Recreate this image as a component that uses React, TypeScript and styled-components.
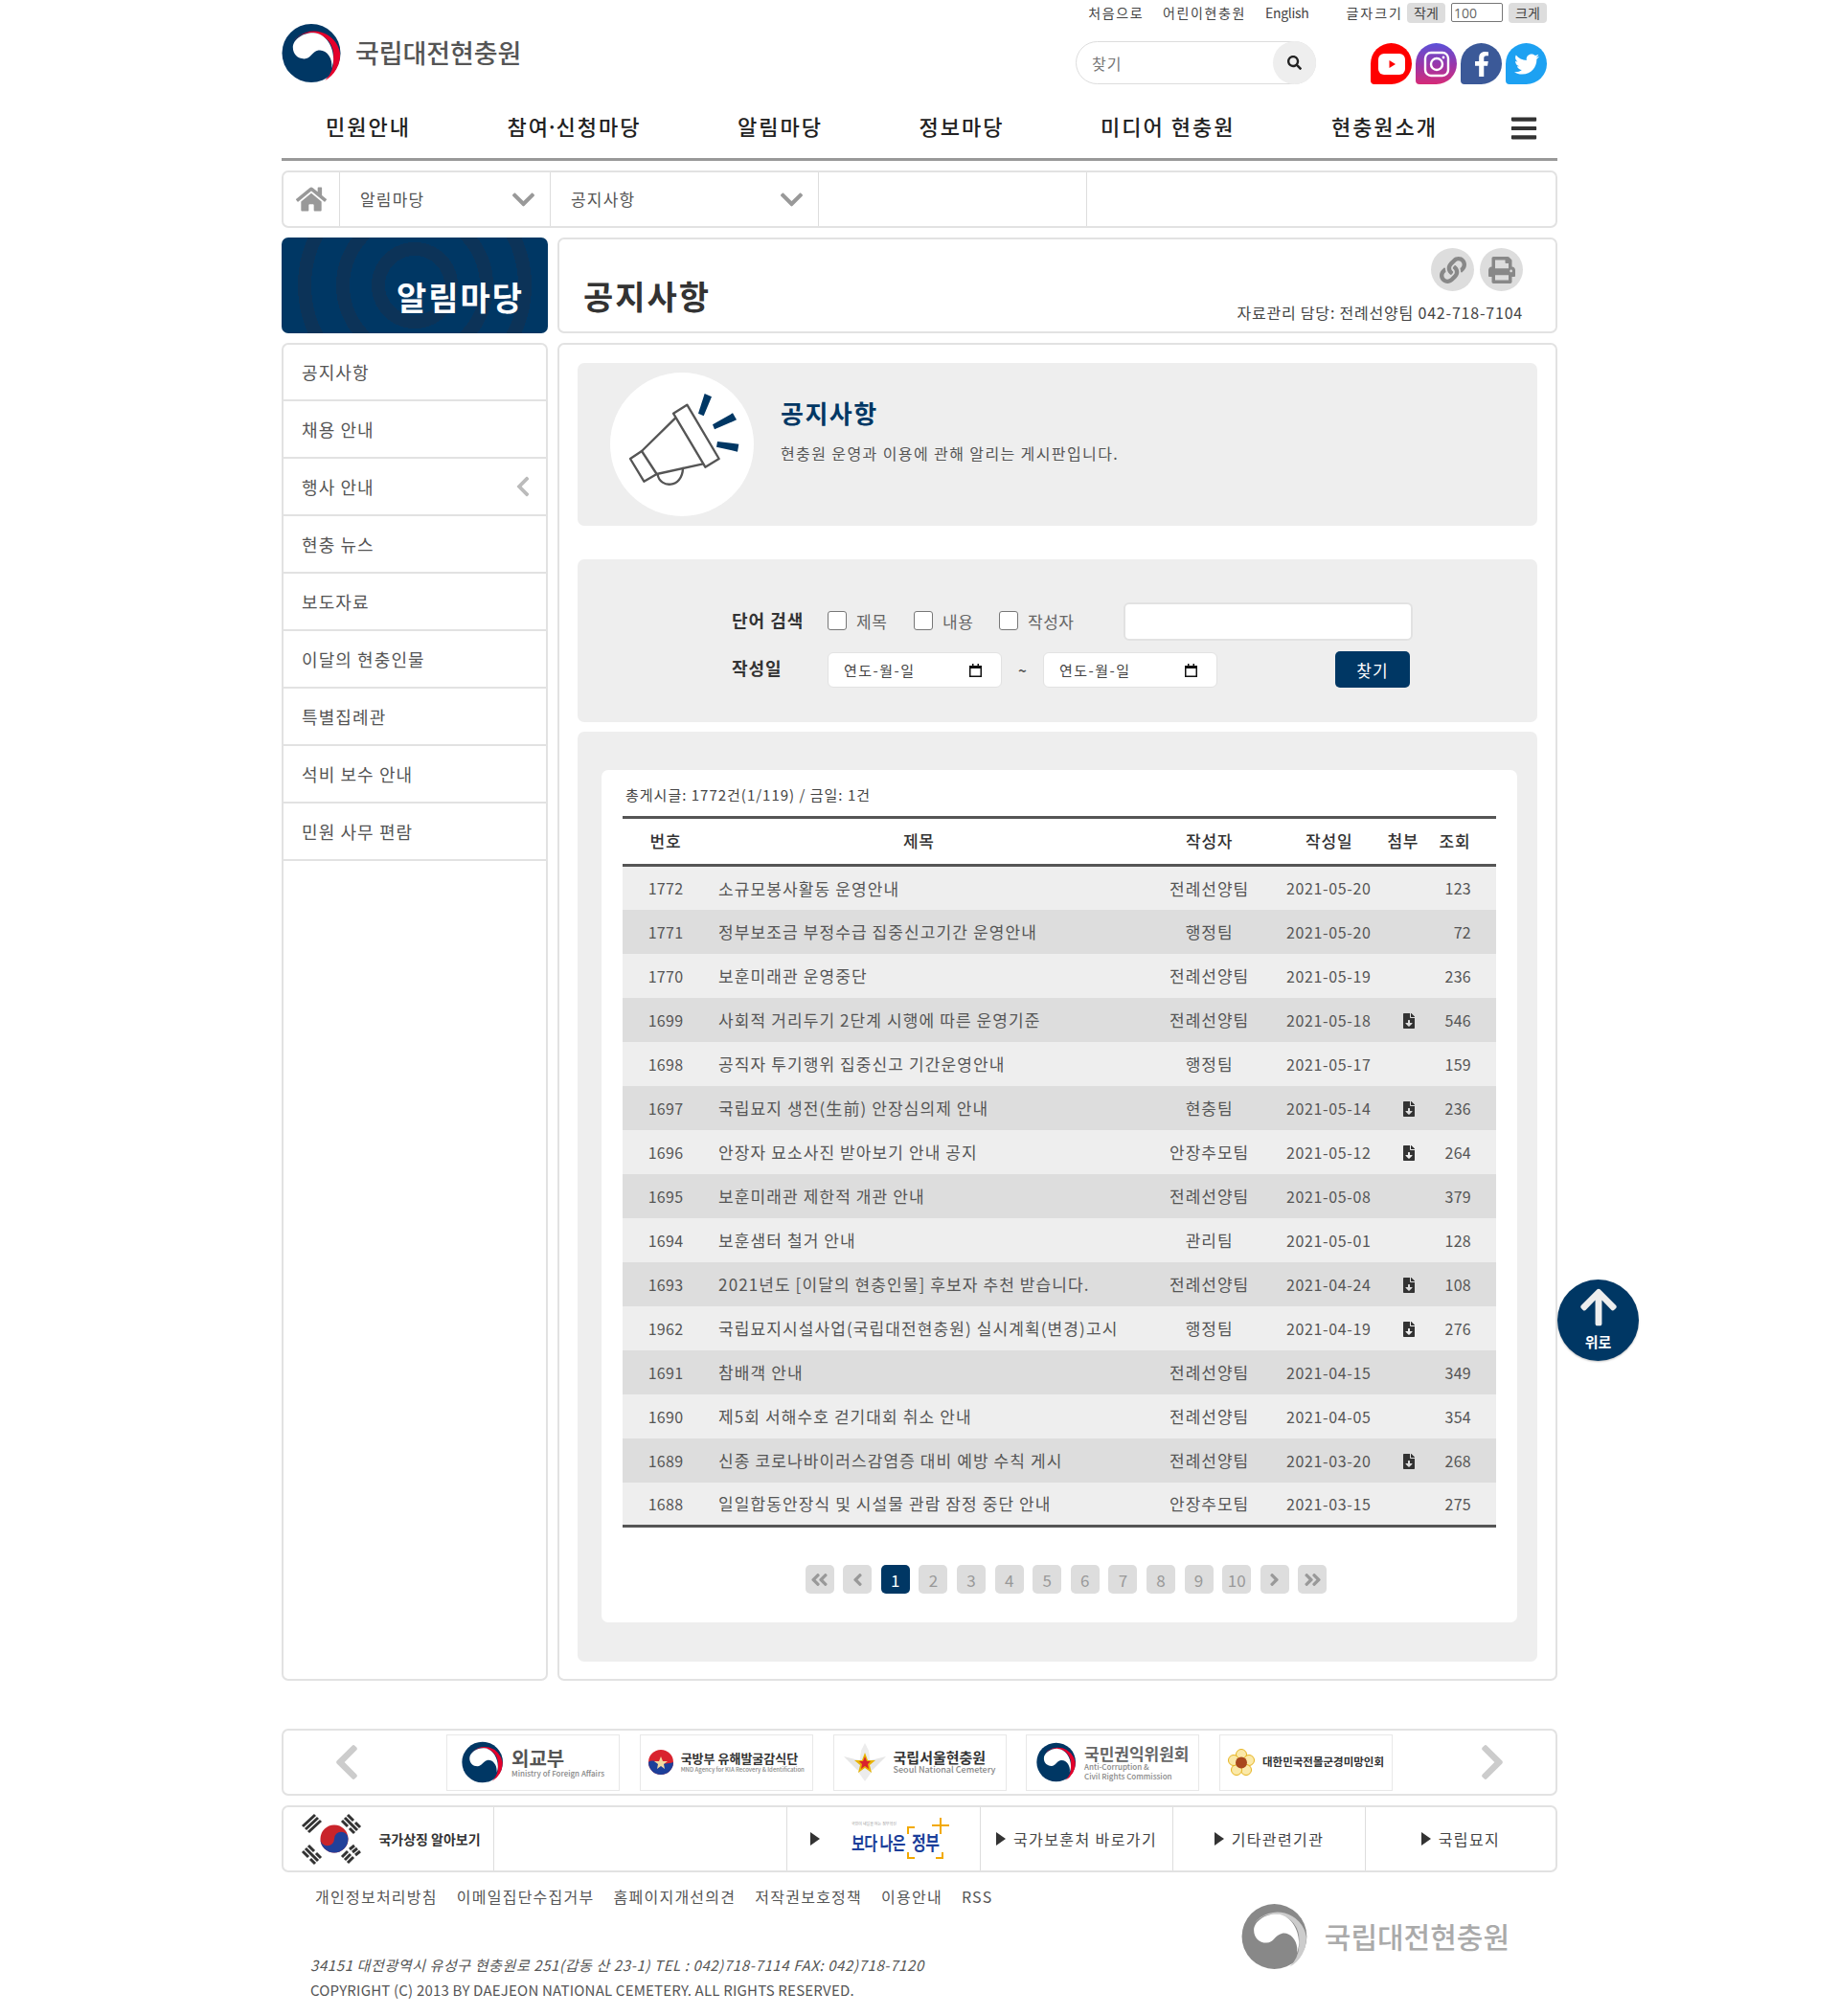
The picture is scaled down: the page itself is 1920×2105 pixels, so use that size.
import React from 'react';
import styled, { createGlobalStyle } from 'styled-components';
import {
  FaAngleDoubleLeft,
  FaAngleDoubleRight,
  FaAngleLeft,
  FaAngleRight,
  FaArrowUp,
  FaBars,
  FaChevronDown,
  FaChevronLeft,
  FaChevronRight,
  FaFacebookF,
  FaFileDownload,
  FaHome,
  FaLink,
  FaPrint,
  FaSearch,
  FaTwitter,
} from 'react-icons/fa';

const NAVY = '#003764';
const FONT = '"Noto Sans CJK KR", "Noto Sans", sans-serif';

const GlobalStyle = createGlobalStyle`
  * { box-sizing: border-box; }
  html, body { margin: 0; padding: 0; background: #fff; }
  body { font-family: ${FONT}; color: #444; }
  a { color: inherit; text-decoration: none; }
  ul { list-style: none; margin: 0; padding: 0; }
`;

const Page = styled.div`
  position: relative;
  width: 1332px;
  height: 2105px;
  margin: 0 auto;
`;

/* header */
const Header = styled.header`
  height: 168px;
  border-bottom: 3px solid #999;
`;

const HeaderTop = styled.div`
  display: flex;
  justify-content: space-between;
  height: 105px;
`;

const Brand = styled.a`
  display: flex;
  align-items: center;
  gap: 14px;
  height: 59px;
  margin-top: 26px;
`;

const BrandName = styled.span<{ $muted?: boolean }>`
  padding-bottom: 2px;
  font-size: ${(p) => (p.$muted ? 30 : 27)}px;
  font-weight: 500;
  letter-spacing: ${(p) => (p.$muted ? 0 : -0.1)}px;
  color: ${(p) => (p.$muted ? '#aaa' : '#555')};
`;

const HeaderRight = styled.div`
  display: flex;
  flex-direction: column;
  align-items: flex-end;
  padding-right: 11px;
`;

const UtilBar = styled.div`
  display: flex;
  align-items: center;
  height: 32px;
  padding-bottom: 6px;
  font-size: 14px;
  letter-spacing: 1.6px;
  color: #444;
`;

const UtilLink = styled.a`
  margin-right: 20px;
  &:nth-child(3) {
    margin-right: 39px;
    letter-spacing: -0.3px;
  }
`;

const UtilLabel = styled.span`
  margin-right: 4px;
  letter-spacing: 2px;
`;

const SizeButton = styled.button`
  width: 40px;
  height: 21px;
  padding: 0;
  border: 0;
  border-radius: 4px;
  background: #ddd;
  color: #444;
  font: 14px ${FONT};
`;

const SizeInput = styled.input`
  width: 54px;
  height: 20px;
  margin: 0 6px;
  padding: 0 2px;
  border: 1px solid #777;
  border-radius: 2px;
  color: #666;
  font: 14px "Open Sans", ${FONT};
`;

const SearchRow = styled.div`
  display: flex;
  align-items: center;
  margin-top: 13px;
`;

const SearchBox = styled.div`
  display: flex;
  align-items: center;
  justify-content: space-between;
  width: 251px;
  height: 45px;
  margin: -2px 57px 0 0;
  padding-left: 16px;
  border: 1px solid #ddd;
  border-radius: 23px;
  color: #777;
  font-size: 16px;
  letter-spacing: 1px;
`;

const SearchButton = styled.span`
  display: flex;
  align-items: center;
  justify-content: center;
  width: 45px;
  height: 45px;
  margin: -1px;
  border-radius: 50%;
  background: #eee;
  color: #222;
  font-size: 15px;
`;

const SocialList = styled.div`
  display: flex;
  gap: 4px;
`;

const Social = styled.a<{ $bg: string }>`
  display: flex;
  align-items: center;
  justify-content: center;
  width: 43px;
  height: 43px;
  border-radius: 50% 50% 50% 4px;
  background: ${(p) => p.$bg};
  color: #fff;
  font-size: 26px;
`;

const Nav = styled.nav`
  display: flex;
  align-items: center;
  justify-content: space-between;
  height: 57px;
  padding: 0 20px 0 46px;
`;

const NavList = styled.div`
  display: flex;
  gap: 100.5px;
  padding-bottom: 5px;
  font-size: 22px;
  font-weight: 500;
  letter-spacing: 2px;
  white-space: nowrap;
  color: #222;
`;

const NavDot = styled.span`
  margin: 0 -4px;
`;

const NavMenu = styled.a`
  display: flex;
  font-size: 30px;
  color: #333;
`;

/* boxed rows */
const Boxed = styled.div`
  border: 2px solid #e2e2e2;
  border-radius: 7px;
  background: #fff;
`;

const Breadcrumb = styled(Boxed)`
  display: grid;
  grid-template-columns: 59px 220px 280px 280px 1fr;
  height: 60px;
  margin-top: 10px;
`;

const CrumbHome = styled.a`
  display: flex;
  align-items: center;
  justify-content: center;
  border-right: 1px solid #ddd;
  color: #999;
  font-size: 32px;
`;

const Crumb = styled.div`
  display: flex;
  align-items: center;
  justify-content: space-between;
  padding: 0 14px 2px 21px;
  border-right: 1px solid #ddd;
  font-size: 17px;
  letter-spacing: 1.2px;
  color: #555;
  svg {
    margin-top: 2px;
    color: #999;
    font-size: 27px;
  }
  &:last-child {
    border-right: 0;
  }
`;

const TitleRow = styled.div`
  display: grid;
  grid-template-columns: 278px minmax(0, 1fr);
  gap: 10px;
  height: 100px;
  margin-top: 10px;
`;

const SectionBanner = styled.div`
  display: flex;
  align-items: center;
  justify-content: flex-end;
  padding: 23px 25px 0 0;
  border-radius: 7px;
  background: radial-gradient(
    circle at 50% 50%,
    ${NAVY} 0 31px,
    #0c3358 31px 45px,
    ${NAVY} 45px 68px,
    #0c3358 68px 82px,
    ${NAVY} 82px 108px,
    #0c3358 108px 122px,
    ${NAVY} 122px
  );
  color: #fff;
  font-size: 34px;
  font-weight: 700;
  letter-spacing: 2px;
`;

const TitlePanel = styled(Boxed)`
  display: flex;
  justify-content: space-between;
  padding: 9px 34px 0 25px;
`;

const PageTitle = styled.h1`
  margin: 25px 0 0;
  font-size: 34px;
  font-weight: 700;
  letter-spacing: 2px;
  color: #333;
`;

const TitleTools = styled.div`
  display: flex;
  flex-direction: column;
  align-items: flex-end;
`;

const ToolButtons = styled.div`
  display: flex;
  gap: 6px;
`;

const ToolButton = styled.a`
  display: flex;
  align-items: center;
  justify-content: center;
  width: 45px;
  height: 45px;
  border-radius: 50%;
  background: #ddd;
  color: #888;
  font-size: 28px;
`;

const Manager = styled.p`
  margin: 10px 0 0;
  font-size: 16px;
  letter-spacing: 0.8px;
  color: #444;
`;

/* body */
const Content = styled.div`
  display: grid;
  grid-template-columns: 278px minmax(0, 1fr);
  gap: 10px;
  height: 1397px;
  margin-top: 10px;
`;

const SideList = styled.ul`
  margin-top: -1px;
`;

const SideItem = styled.li`
  display: flex;
  align-items: center;
  justify-content: space-between;
  height: 60px;
  padding: 0 12px 0 19px;
  border-bottom: 2px solid #e2e2e2;
  font-size: 18px;
  letter-spacing: 1.1px;
  color: #555;
  svg {
    color: #bbb;
    font-size: 24px;
  }
`;

const Main = styled(Boxed)`
  display: flex;
  flex-direction: column;
  padding: 19px 19px 18px;
`;

const Panel = styled.section`
  border-radius: 7px;
  background: #eee;
`;

const Intro = styled(Panel)`
  display: flex;
  gap: 28px;
  height: 170px;
  padding: 10px 0 0 34px;
`;

const IntroCircle = styled.div`
  width: 150px;
  height: 150px;
  border-radius: 50%;
  background: #fff;
  svg {
    display: block;
  }
`;

const IntroTitle = styled.h2`
  margin: 24px 0 0;
  font-size: 26px;
  font-weight: 700;
  line-height: 36px;
  letter-spacing: 1.5px;
  color: ${NAVY};
`;

const IntroText = styled.p`
  margin: 12px 0 0;
  font-size: 16px;
  line-height: 24px;
  letter-spacing: 1.4px;
  color: #555;
`;

const SearchPanel = styled(Panel)`
  height: 170px;
  margin-top: 35px;
  padding: 45px 130px 0 161px;
`;

const SearchLine = styled.div<{ $second?: boolean }>`
  display: flex;
  align-items: center;
  height: ${(p) => (p.$second ? 38 : 40)}px;
  margin-top: ${(p) => (p.$second ? 11 : 0)}px;
`;

const FieldLabel = styled.span`
  width: 100px;
  margin-bottom: 4px;
  font-size: 18px;
  font-weight: 700;
  letter-spacing: 1px;
  color: #333;
`;

const CheckLabel = styled.label<{ $width: number }>`
  display: flex;
  align-items: center;
  gap: 10px;
  width: ${(p) => p.$width}px;
  margin-bottom: 2px;
  font-size: 17px;
  letter-spacing: 0.5px;
  color: #666;
`;

const CheckBox = styled.input`
  appearance: none;
  width: 20px;
  height: 20px;
  margin: 0;
  border: 1px solid #777;
  border-radius: 3px;
  background: #fff;
`;

const TextField = styled.input`
  width: 302px;
  height: 40px;
  border: 2px solid #e2e2e2;
  border-radius: 6px;
  background: #fff;
`;

const DateField = styled.div`
  display: flex;
  align-items: center;
  justify-content: space-between;
  width: 182px;
  height: 37px;
  margin-top: 1px;
  padding: 0 20px 0 16px;
  border: 1px solid #e2e2e2;
  border-radius: 6px;
  background: #fff;
  font-size: 15px;
  letter-spacing: 1.5px;
  color: #444;
`;

const DateDash = styled.span`
  width: 43px;
  text-align: center;
  font-size: 15px;
  font-weight: 700;
  color: #555;
`;

const FindButton = styled.button`
  width: 78px;
  height: 38px;
  margin: 0 3px 0 auto;
  padding: 0;
  border: 0;
  border-radius: 5px;
  background: ${NAVY};
  color: #fff;
  font: 17px ${FONT};
  letter-spacing: 1px;
`;

const ListPanel = styled(Panel)`
  flex: 1;
  margin-top: 10px;
  padding: 40px 21px 41px 25px;
`;

const ListCard = styled.div`
  height: 100%;
  padding: 0 22px;
  border-radius: 7px;
  background: #fff;
`;

const ListCount = styled.p`
  height: 48px;
  margin: 0;
  padding-left: 3px;
  font-size: 15px;
  line-height: 52px;
  letter-spacing: 1px;
  color: #444;
`;

const Table = styled.table`
  width: 100%;
  border-collapse: collapse;
  table-layout: fixed;
  border-top: 3px solid #555;
  border-bottom: 3px solid #555;
  font-size: 16px;
  color: #555;
`;

const Col = styled.col<{ $width: number }>`
  width: ${(p) => p.$width}px;
`;

const HeadRow = styled.tr`
  height: 50px;
  border-bottom: 3px solid #555;
`;

const HeadCell = styled.th<{ $right?: number; $left?: number }>`
  padding: 0 ${(p) => p.$right || 0}px 2px ${(p) => p.$left || 0}px;
  font-size: 17px;
  font-weight: 500;
  letter-spacing: 0.8px;
  white-space: nowrap;
  color: #333;
`;

const Row = styled.tr`
  height: 46px;
  background: #eee;
  &:nth-child(even) {
    background: #ddd;
  }
`;

const NumberCell = styled.td`
  text-align: center;
  letter-spacing: 0.3px;
`;

const TitleCell = styled.td`
  padding-left: 10px;
  font-size: 17px;
  letter-spacing: 1.1px;
  white-space: nowrap;
`;

const TeamCell = styled.td`
  text-align: center;
  font-size: 17px;
  letter-spacing: 1px;
  white-space: nowrap;
`;

const DateCell = styled.td`
  padding-left: 6px;
  text-align: center;
  letter-spacing: 0.65px;
`;

const FileCell = styled.td`
  text-align: center;
  svg {
    display: inline-block;
    vertical-align: -2px;
    color: #333;
    font-size: 16px;
  }
`;

const ViewsCell = styled.td`
  padding-right: 26px;
  text-align: right;
  letter-spacing: 0.3px;
`;

const Pager = styled.div`
  display: flex;
  justify-content: center;
  gap: 9.6px;
  margin-top: 39px;
  padding-left: 14px;
`;

const PageButton = styled.a<{ $active?: boolean }>`
  display: flex;
  align-items: center;
  justify-content: center;
  width: 30px;
  height: 30px;
  border-radius: 5px;
  background: ${(p) => (p.$active ? NAVY : '#ddd')};
  color: ${(p) => (p.$active ? '#fff' : '#999')};
  font-size: 17px;
  svg {
    font-size: 21px;
  }
`;

/* footer */
const Carousel = styled(Boxed)`
  display: grid;
  grid-template-columns: 170px minmax(0, 1fr) 170px;
  align-items: center;
  height: 70px;
  margin-top: 50px;
`;

const CarouselArrow = styled.a<{ $right?: boolean }>`
  display: flex;
  justify-content: ${(p) => (p.$right ? 'flex-end' : 'flex-start')};
  padding: 0 45px;
  color: #ccc;
  font-size: 42px;
`;

const LogoTrack = styled.div`
  display: flex;
  justify-content: space-between;
`;

const LogoBox = styled.a`
  display: flex;
  align-items: center;
  justify-content: center;
  gap: 8px;
  width: 181px;
  height: 59px;
  border: 1px solid #e8e8e8;
`;

const LogoText = styled.div`
  display: flex;
  flex-direction: column;
  white-space: nowrap;
`;

const LogoMain = styled.span<{ $size: number; $color?: string }>`
  font-size: ${(p) => p.$size}px;
  font-weight: 700;
  line-height: 1.15;
  color: ${(p) => p.$color || '#333'};
`;

const LogoSub = styled.span<{ $size: number }>`
  font-size: ${(p) => p.$size}px;
  font-weight: 500;
  line-height: 1.2;
  color: #888;
`;

const RelatedBar = styled(Boxed)`
  display: grid;
  grid-template-columns: 220px 306px 202px 201px 201px minmax(0, 1fr);
  height: 70px;
  margin-top: 10px;
`;

const RelatedCell = styled.a`
  display: flex;
  align-items: center;
  justify-content: center;
  gap: 8px;
  border-right: 1px solid #ddd;
  font-size: 16px;
  letter-spacing: 1.4px;
  color: #444;
  &:last-child {
    border-right: 0;
  }
`;

const SymbolCell = styled(RelatedCell)`
  gap: 6px;
`;

const BetterGovCell = styled(RelatedCell)`
  justify-content: flex-start;
  gap: 33px;
  padding-left: 24px;
`;

const Triangle = styled.i`
  width: 0;
  height: 0;
  border-top: 7px solid transparent;
  border-bottom: 7px solid transparent;
  border-left: 10px solid #333;
`;

const SymbolName = styled.span`
  font-size: 14px;
  font-weight: 700;
  letter-spacing: 0;
  color: #333;
`;

const BetterGov = styled.span`
  position: relative;
  display: flex;
  align-items: center;
  width: 102px;
  height: 44px;
`;

const BetterGovWord = styled.span<{ $offset: number; $size: number }>`
  margin: 6px 0 0 ${(p) => p.$offset}px;
  transform: scaleY(1.3);
  font-size: ${(p) => p.$size}px;
  font-weight: 700;
  line-height: 1;
  letter-spacing: -0.5px;
  white-space: nowrap;
  color: #1c3f9a;
`;

const BetterGovMotto = styled.span`
  position: absolute;
  top: 3px;
  left: 0;
  font-size: 4px;
  line-height: 6px;
  letter-spacing: 0;
  white-space: nowrap;
  color: #999;
`;

const BetterGovFrame = styled.svg`
  position: absolute;
  top: 0;
  left: 56px;
`;

const Footer = styled.footer`
  display: flex;
  justify-content: space-between;
`;

const FooterLeft = styled.div`
  padding-top: 15px;
`;

const FooterLinks = styled.ul`
  display: flex;
  gap: 20px;
  padding-left: 35px;
  font-size: 16px;
  line-height: 20px;
  letter-spacing: 1.25px;
  color: #555;
`;

const Address = styled.address`
  margin: 50px 0 0 30px;
  font-size: 15px;
  line-height: 24px;
  letter-spacing: 0.6px;
  color: #555;
`;

const Copyright = styled.p`
  margin: 1px 0 0 30px;
  font-size: 15px;
  line-height: 26px;
  letter-spacing: 0.2px;
  color: #555;
`;

const FooterBrand = styled.div`
  display: flex;
  align-items: center;
  gap: 17px;
  height: 68px;
  margin: 33px 50px 0 0;
`;

const TopButton = styled.a`
  position: absolute;
  top: 1336px;
  left: 1332px;
  display: flex;
  flex-direction: column;
  align-items: center;
  width: 85px;
  height: 85px;
  padding-top: 7px;
  border-radius: 50%;
  background: ${NAVY};
  box-shadow: 0 1px 2px rgba(0, 0, 0, 0.25);
  color: #fff;
  font-size: 15px;
  font-weight: 700;
  line-height: 20px;
  svg {
    margin-bottom: 4px;
    color: #eee;
    font-size: 44px;
  }
`;

const Taegeuk: React.FC<{ size: number; dark?: string; accent?: string }> = ({
  size,
  dark = NAVY,
  accent = '#e4002b',
}) => (
  <svg width={size} height={size} viewBox="0 0 64 64">
    <circle cx="31.5" cy="32" r="31" fill={dark} />
    <path
      d="M12.7 19 A28 28 0 0 1 62 32 A31 31 0 0 1 46 61 A30 30 0 0 0 55 37 A24 24 0 0 0 34 10.5 A26 26 0 0 0 12.7 19Z"
      fill={accent}
    />
    <path
      d="M12 26 C12 17 24 10 34 10.5 C46 11 55 24 55 38 C55 42 54 45 53 48 C55 37 47 27.5 39 29 C32 30.5 31 38 24 38 C17 38 12 33 12 26Z"
      fill="#fff"
    />
  </svg>
);

const Megaphone = () => (
  <svg width="150" height="150" viewBox="9 12 450 450" fill="none">
    <g stroke="#555" strokeWidth="7" strokeLinejoin="round" strokeLinecap="round">
      <path d="M207 140 L250 113 L350 282 L307 308Z" />
      <path d="M72 282 L108 258 L155 330 L115 353Z" />
      <path d="M213 155 L108 258" />
      <path d="M300 298 L155 330" />
      <path d="M158 332 C165 375 235 375 237 312" />
    </g>
    <g fill={NAVY}>
      <path d="M305 78 L327 88 L302 148 L285 140Z" />
      <path d="M330 175 L393 139 L405 160 L336 190Z" />
      <path d="M345 228 L412 236 L408 260 L342 245Z" />
    </g>
  </svg>
);

const CalendarIcon = () => (
  <svg width="13" height="14" viewBox="0 0 13 14">
    <path d="M3 0h1.5v2h4V0H10v2h3v12H0V2h3z" fill="#111" />
    <rect x="1.5" y="5" width="10" height="7.5" fill="#fff" />
  </svg>
);

const YoutubeIcon = () => (
  <svg width="28" height="22" viewBox="0 0 28 22">
    <rect width="28" height="22" rx="6" fill="#fff" />
    <path d="M11.5 7 L18 11 L11.5 15Z" fill="#f00" />
  </svg>
);

const InstagramIcon = () => (
  <svg width="28" height="28" viewBox="0 0 28 28" fill="none" stroke="#fff">
    <rect x="2" y="2" width="24" height="24" rx="6" strokeWidth="2.4" />
    <circle cx="14" cy="14" r="6" strokeWidth="2.4" />
    <circle cx="21" cy="7" r="1.4" fill="#fff" stroke="none" />
  </svg>
);

const FlagIcon = () => (
  <svg width="80" height="56" viewBox="0 0 76 56">
    <circle cx="38" cy="28" r="14.5" fill="#c9242b" />
    <path
      d="M23.5 28 A14.5 14.5 0 0 0 52.5 28 A7.25 7.25 0 0 0 38 28 A7.25 7.25 0 0 1 23.5 28Z"
      fill="#21409a"
    />
    <g stroke="#333" strokeWidth="3">
      <path d="M5 15 L18 3 M8 18 L21 6 M11 21 L24 9" />
      <path d="M52 3 L58 9 M60 11 L65 16 M49 6 L62 19 M46 9 L52 15 M54 17 L59 22" />
      <path d="M5 41 L11 47 M13 49 L18 54 M8 38 L21 51 M11 35 L17 41 M19 43 L24 48" />
      <path d="M46 47 L52 41 M54 39 L59 35 M49 50 L55 44 M57 42 L62 38 M52 53 L58 47 M60 45 L65 41" />
    </g>
  </svg>
);

const ForcesEmblem = () => (
  <svg width="44" height="44" viewBox="0 0 44 44">
    <path d="M0 16 L16 20 L28 20 L44 16 L30 30 L14 30Z" fill="#e6e6e6" />
    <path d="M22 2 L26 10 L29 32 L22 42 L15 32 L18 10Z" fill="#ececec" />
    <path d="M22 12 L25 20 L33 20 L27 25 L29 33 L22 28 L15 33 L17 25 L11 20 L19 20Z" fill="#e8b400" />
    <path d="M22 16 L24 21 L28 21 L25 24 L26 29 L22 26 L18 29 L19 24 L16 21 L20 21Z" fill="#d9232e" />
  </svg>
);

const MoundEmblem = () => (
  <svg width="28" height="28" viewBox="0 0 28 28">
    <g fill="#fbe9a8" stroke="#e6b422">
      <circle cx="14" cy="6" r="5.5" />
      <circle cx="22" cy="12" r="5.5" />
      <circle cx="19" cy="22" r="5.5" />
      <circle cx="9" cy="22" r="5.5" />
      <circle cx="6" cy="12" r="5.5" />
    </g>
    <circle cx="14" cy="14.5" r="6" fill="#a8471c" />
  </svg>
);

const MissingSoldierEmblem = () => (
  <svg width="26" height="26" viewBox="0 0 26 26">
    <circle cx="13" cy="13" r="13" fill="#d9232e" />
    <path d="M0 13 C6 8 12 18 26 13 A13 13 0 0 1 0 13Z" fill="#1c3f9a" />
    <path d="M13 7 L15 12 L20 12 L16 15 L17 20 L13 17 L9 20 L10 15 L6 12 L11 12Z" fill="#f4d9a0" />
  </svg>
);

const sideItems = [
  '공지사항',
  '채용 안내',
  '행사 안내',
  '현충 뉴스',
  '보도자료',
  '이달의 현충인물',
  '특별집례관',
  '석비 보수 안내',
  '민원 사무 편람',
];

const notices: [string, string, string, string, boolean, string][] = [
  ['1772', '소규모봉사활동 운영안내', '전례선양팀', '2021-05-20', false, '123'],
  ['1771', '정부보조금 부정수급 집중신고기간 운영안내', '행정팀', '2021-05-20', false, '72'],
  ['1770', '보훈미래관 운영중단', '전례선양팀', '2021-05-19', false, '236'],
  ['1699', '사회적 거리두기 2단계 시행에 따른 운영기준', '전례선양팀', '2021-05-18', true, '546'],
  ['1698', '공직자 투기행위 집중신고 기간운영안내', '행정팀', '2021-05-17', false, '159'],
  ['1697', '국립묘지 생전(生前) 안장심의제 안내', '현충팀', '2021-05-14', true, '236'],
  ['1696', '안장자 묘소사진 받아보기 안내 공지', '안장추모팀', '2021-05-12', true, '264'],
  ['1695', '보훈미래관 제한적 개관 안내', '전례선양팀', '2021-05-08', false, '379'],
  ['1694', '보훈샘터 철거 안내', '관리팀', '2021-05-01', false, '128'],
  ['1693', '2021년도 [이달의 현충인물] 후보자 추천 받습니다.', '전례선양팀', '2021-04-24', true, '108'],
  ['1962', '국립묘지시설사업(국립대전현충원) 실시계획(변경)고시', '행정팀', '2021-04-19', true, '276'],
  ['1691', '참배객 안내', '전례선양팀', '2021-04-15', false, '349'],
  ['1690', '제5회 서해수호 걷기대회 취소 안내', '전례선양팀', '2021-04-05', false, '354'],
  ['1689', '신종 코로나바이러스감염증 대비 예방 수칙 게시', '전례선양팀', '2021-03-20', true, '268'],
  ['1688', '일일합동안장식 및 시설물 관람 잠정 중단 안내', '안장추모팀', '2021-03-15', false, '275'],
];

const pages = ['1', '2', '3', '4', '5', '6', '7', '8', '9', '10'];

const footerLinks = ['개인정보처리방침', '이메일집단수집거부', '홈페이지개선의견', '저작권보호정책', '이용안내', 'RSS'];

export default function App() {
  return (
    <Page>
      <GlobalStyle />
      <Header>
        <HeaderTop>
          <Brand href="#">
            <Taegeuk size={63} />
            <BrandName>국립대전현충원</BrandName>
          </Brand>
          <HeaderRight>
            <UtilBar>
              <UtilLink href="#">처음으로</UtilLink>
              <UtilLink href="#">어린이현충원</UtilLink>
              <UtilLink href="#">English</UtilLink>
              <UtilLabel>글자크기</UtilLabel>
              <SizeButton>작게</SizeButton>
              <SizeInput defaultValue="100" />
              <SizeButton>크게</SizeButton>
            </UtilBar>
            <SearchRow>
              <SearchBox>
                찾기
                <SearchButton>
                  <FaSearch />
                </SearchButton>
              </SearchBox>
              <SocialList>
                <Social href="#" $bg="#f00">
                  <YoutubeIcon />
                </Social>
                <Social href="#" $bg="linear-gradient(#5b51d8, #9c36a8 55%, #d62b77)">
                  <InstagramIcon />
                </Social>
                <Social href="#" $bg="#3b5998">
                  <FaFacebookF />
                </Social>
                <Social href="#" $bg="#1da1f2">
                  <FaTwitter />
                </Social>
              </SocialList>
            </SearchRow>
          </HeaderRight>
        </HeaderTop>
        <Nav>
          <NavList>
            <a href="#">민원안내</a>
            <a href="#">
              참여<NavDot>·</NavDot>신청마당
            </a>
            <a href="#">알림마당</a>
            <a href="#">정보마당</a>
            <a href="#">미디어 현충원</a>
            <a href="#">현충원소개</a>
          </NavList>
          <NavMenu href="#">
            <FaBars />
          </NavMenu>
        </Nav>
      </Header>

      <Breadcrumb>
        <CrumbHome href="#">
          <FaHome />
        </CrumbHome>
        <Crumb>
          알림마당
          <FaChevronDown />
        </Crumb>
        <Crumb>
          공지사항
          <FaChevronDown />
        </Crumb>
        <Crumb />
        <Crumb />
      </Breadcrumb>

      <TitleRow>
        <SectionBanner>알림마당</SectionBanner>
        <TitlePanel>
          <PageTitle>공지사항</PageTitle>
          <TitleTools>
            <ToolButtons>
              <ToolButton href="#">
                <FaLink />
              </ToolButton>
              <ToolButton href="#">
                <FaPrint />
              </ToolButton>
            </ToolButtons>
            <Manager>자료관리 담당: 전례선양팀 042-718-7104</Manager>
          </TitleTools>
        </TitlePanel>
      </TitleRow>

      <Content>
        <Boxed>
          <SideList>
            {sideItems.map((item) => (
              <SideItem key={item}>
                {item}
                {item === '행사 안내' && <FaChevronLeft />}
              </SideItem>
            ))}
          </SideList>
        </Boxed>
        <Main>
          <Intro>
            <IntroCircle>
              <Megaphone />
            </IntroCircle>
            <div>
              <IntroTitle>공지사항</IntroTitle>
              <IntroText>현충원 운영과 이용에 관해 알리는 게시판입니다.</IntroText>
            </div>
          </Intro>

          <SearchPanel>
            <SearchLine>
              <FieldLabel>단어 검색</FieldLabel>
              <CheckLabel $width={90}>
                <CheckBox type="checkbox" />
                제목
              </CheckLabel>
              <CheckLabel $width={89}>
                <CheckBox type="checkbox" />
                내용
              </CheckLabel>
              <CheckLabel $width={130}>
                <CheckBox type="checkbox" />
                작성자
              </CheckLabel>
              <TextField />
            </SearchLine>
            <SearchLine $second>
              <FieldLabel>작성일</FieldLabel>
              <DateField>
                연도-월-일
                <CalendarIcon />
              </DateField>
              <DateDash>~</DateDash>
              <DateField>
                연도-월-일
                <CalendarIcon />
              </DateField>
              <FindButton>찾기</FindButton>
            </SearchLine>
          </SearchPanel>

          <ListPanel>
            <ListCard>
              <ListCount>총게시글: 1772건(1/119) / 금일: 1건</ListCount>
              <Table>
                <colgroup>
                  <Col $width={90} />
                  <Col $width={462} />
                  <Col $width={120} />
                  <Col $width={124} />
                  <Col $width={48} />
                  <Col $width={67} />
                </colgroup>
                <thead>
                  <HeadRow>
                    <HeadCell>번호</HeadCell>
                    <HeadCell $right={24}>제목</HeadCell>
                    <HeadCell>작성자</HeadCell>
                    <HeadCell $left={6}>작성일</HeadCell>
                    <HeadCell $right={12}>첨부</HeadCell>
                    <HeadCell $right={19}>조회</HeadCell>
                  </HeadRow>
                </thead>
                <tbody>
                  {notices.map(([no, title, team, date, file, views]) => (
                    <Row key={no}>
                      <NumberCell>{no}</NumberCell>
                      <TitleCell>{title}</TitleCell>
                      <TeamCell>{team}</TeamCell>
                      <DateCell>{date}</DateCell>
                      <FileCell>{file && <FaFileDownload />}</FileCell>
                      <ViewsCell>{views}</ViewsCell>
                    </Row>
                  ))}
                </tbody>
              </Table>
              <Pager>
                <PageButton href="#">
                  <FaAngleDoubleLeft />
                </PageButton>
                <PageButton href="#">
                  <FaAngleLeft />
                </PageButton>
                {pages.map((n) => (
                  <PageButton href="#" key={n} $active={n === '1'}>
                    {n}
                  </PageButton>
                ))}
                <PageButton href="#">
                  <FaAngleRight />
                </PageButton>
                <PageButton href="#">
                  <FaAngleDoubleRight />
                </PageButton>
              </Pager>
            </ListCard>
          </ListPanel>
        </Main>
      </Content>

      <Carousel>
        <CarouselArrow href="#">
          <FaChevronLeft />
        </CarouselArrow>
        <LogoTrack>
          <LogoBox href="#">
            <Taegeuk size={44} />
            <LogoText>
              <LogoMain $size={20} $color="#555">
                외교부
              </LogoMain>
              <LogoSub $size={8}>Ministry of Foreign Affairs</LogoSub>
            </LogoText>
          </LogoBox>
          <LogoBox href="#">
            <MissingSoldierEmblem />
            <LogoText>
              <LogoMain $size={13}>국방부 유해발굴감식단</LogoMain>
              <LogoSub $size={6}>MND Agency for KIA Recovery &amp; Identification</LogoSub>
            </LogoText>
          </LogoBox>
          <LogoBox href="#">
            <ForcesEmblem />
            <LogoText>
              <LogoMain $size={15}>국립서울현충원</LogoMain>
              <LogoSub $size={9}>Seoul National Cemetery</LogoSub>
            </LogoText>
          </LogoBox>
          <LogoBox href="#">
            <Taegeuk size={42} />
            <LogoText>
              <LogoMain $size={17} $color="#666">
                국민권익위원회
              </LogoMain>
              <LogoSub $size={8}>Anti-Corruption &amp;</LogoSub>
              <LogoSub $size={8}>Civil Rights Commission</LogoSub>
            </LogoText>
          </LogoBox>
          <LogoBox href="#">
            <MoundEmblem />
            <LogoText>
              <LogoMain $size={11.5}>대한민국전몰군경미망인회</LogoMain>
            </LogoText>
          </LogoBox>
        </LogoTrack>
        <CarouselArrow href="#" $right>
          <FaChevronRight />
        </CarouselArrow>
      </Carousel>

      <RelatedBar>
        <SymbolCell href="#">
          <FlagIcon />
          <SymbolName>국가상징 알아보기</SymbolName>
        </SymbolCell>
        <RelatedCell />
        <BetterGovCell href="#">
          <Triangle />
          <BetterGov>
            <BetterGovMotto>국민이 내일을 여는 정부혁신</BetterGovMotto>
            <BetterGovWord $offset={0} $size={15}>
              보다 나은
            </BetterGovWord>
            <BetterGovWord $offset={7} $size={16}>
              정부
            </BetterGovWord>
            <BetterGovFrame width="46" height="44" viewBox="0 0 46 44" fill="none" stroke="#f2a900" strokeWidth="2">
              <path d="M3 17 V10 H10" />
              <path d="M3 36 V42 H10" />
              <path d="M32 42 H39 V36" />
              <path d="M37 0 V17 M28 8 H46" />
            </BetterGovFrame>
          </BetterGov>
        </BetterGovCell>
        <RelatedCell href="#">
          <Triangle />
          국가보훈처 바로가기
        </RelatedCell>
        <RelatedCell href="#">
          <Triangle />
          기타관련기관
        </RelatedCell>
        <RelatedCell href="#">
          <Triangle />
          국립묘지
        </RelatedCell>
      </RelatedBar>

      <Footer>
        <FooterLeft>
          <FooterLinks>
            {footerLinks.map((link) => (
              <li key={link}>{link}</li>
            ))}
          </FooterLinks>
          <Address>34151 대전광역시 유성구 현충원로 251(갑동 산 23-1) TEL : 042)718-7114 FAX: 042)718-7120</Address>
          <Copyright>COPYRIGHT (C) 2013 BY DAEJEON NATIONAL CEMETERY. ALL RIGHTS RESERVED.</Copyright>
        </FooterLeft>
        <FooterBrand>
          <Taegeuk size={70} dark="#888" accent="#ccc" />
          <BrandName $muted>국립대전현충원</BrandName>
        </FooterBrand>
      </Footer>

      <TopButton href="#">
        <FaArrowUp />
        위로
      </TopButton>
    </Page>
  );
}
